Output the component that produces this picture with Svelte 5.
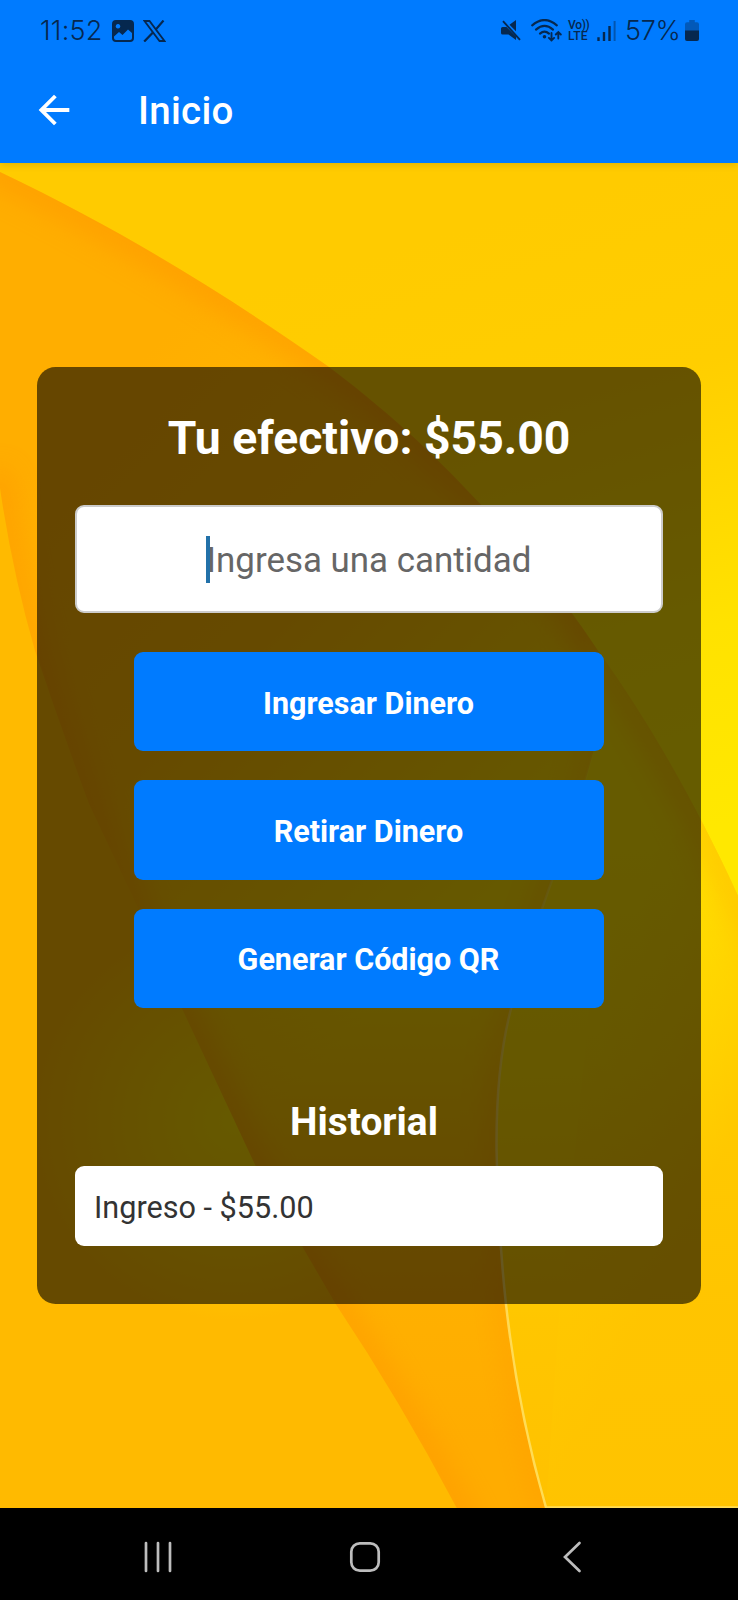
<script>
  let amount = $state('');
  const balance = 55;
  const actions = ['Ingresar Dinero', 'Retirar Dinero', 'Generar Código QR'];
  const history = [{ kind: 'Ingreso', value: 55 }];
</script>

<div class="phone">
  <header>
    <div class="status">
      <span class="clock">11:52</span>
      <svg class="photo" width="22" height="22" viewBox="0 0 22 22">
        <path fill-rule="evenodd" d="M4 0h14a4 4 0 0 1 4 4v14a4 4 0 0 1-4 4H4a4 4 0 0 1-4-4V4a4 4 0 0 1 4-4ZM6 4a2.3 2.3 0 1 0 .01 0ZM2 16.5V18a2 2 0 0 0 2 2h14a2 2 0 0 0 2-2v-5l-4-3.5-5.5 5.5-3.5-3Z" fill="currentColor" />
      </svg>
      <svg class="x" width="23" height="22" viewBox="0 0 23 22">
        <path d="M1.5 1h5l15 20h-5Z" fill="none" stroke="currentColor" stroke-width="1.8" />
        <path d="M20.5.5 12.7 9.6M9.7 12.8 1.2 21.6" stroke="currentColor" stroke-width="2.2" />
      </svg>
      <span class="spacer"></span>
      <svg class="mute" width="20" height="21" viewBox="0 0 20 21">
        <path d="M0 8.6Q0 7 1.6 7H5.5L15 16.5V20L7.5 14.5H1.6Q0 14.5 0 13ZM8.5 4.800 15 0v11.3Z" fill="currentColor" />
        <path d="m2 1.2 17 18.6" stroke="currentColor" stroke-width="1.9" />
      </svg>
      <svg class="wifi" width="31" height="23" viewBox="0 0 31 23">
        <g fill="none" stroke="currentColor" stroke-width="2.2" stroke-linecap="round">
          <path d="M1.2 6.3Q13.5-4.2 25.8 6.3M5 10.6q8.5-7.4 17 0M9 14.6q4.5-3.8 9 0" />
          <path d="M20.5 14v7.5m-2.6-2.600 2.600 2.600 2.600-2.600M27.300 19.500v-6.500m-2.500 2.500 2.500-2.500 2.500 2.500" stroke-width="1.9" />
        </g>
        <circle cx="13.5" cy="17.8" r="1.8" fill="currentColor" />
      </svg>
      <span class="volte"><span>Vo))</span><span class="lte">LTE</span></span>
      <svg class="signal" width="19" height="20" viewBox="0 0 19 20">
        <path d="M1.5 16.2V20M7 11v9M12.5 5v15" stroke="currentColor" stroke-width="2.4" />
        <path d="M17.6 0v20" stroke="currentColor" stroke-width="2" opacity=".45" />
      </svg>
      <span class="percent">57%</span>
      <svg class="battery" width="14" height="21" viewBox="0 0 14 21">
        <path d="M4.2 0h5.6v2.2H12q2 0 2 2V11H0V4.2q0-2 2-2h2.2Z" fill="currentColor" opacity=".4" />
        <path d="M0 10.5h14V19q0 2-2 2H2q-2 0-2-2Z" fill="currentColor" />
      </svg>
    </div>
    <div class="appbar">
      <svg width="46" height="46" viewBox="0 0 24 24" fill="#fff">
        <path d="M20 11H7.83l5.59-5.59L12 4l-8 8 8 8 1.41-1.41L7.83 13H20v-2z" />
      </svg>
      <h1>Inicio</h1>
    </div>
  </header>

  <main>
    <svg class="wallpaper" viewBox="0 162 738 1346" preserveAspectRatio="none" aria-hidden="true">
      <defs>
        <linearGradient id="sky" gradientUnits="userSpaceOnUse" x1="420" y1="240" x2="600" y2="860">
          <stop offset="0" stop-color="#ffcb00" /><stop offset=".3" stop-color="#ffce00" /><stop offset=".7" stop-color="#ffe200" /><stop offset="1" stop-color="#ffe800" />
        </linearGradient>
        <linearGradient id="band" gradientUnits="userSpaceOnUse" x1="120" y1="380" x2="560" y2="820">
          <stop offset="0" stop-color="#ffae00" /><stop offset=".45" stop-color="#ffb900" /><stop offset="1" stop-color="#ffde00" />
        </linearGradient>
        <linearGradient id="bandFade" gradientUnits="userSpaceOnUse" x1="0" y1="950" x2="0" y2="1440">
          <stop offset="0" stop-color="#ffad00" stop-opacity="0" /><stop offset=".7" stop-color="#ffb000" /><stop offset="1" stop-color="#ffac00" />
        </linearGradient>
        <radialGradient id="leaf" gradientUnits="userSpaceOnUse" cx="235" cy="1120" r="200">
          <stop offset="0" stop-color="#ffe000" /><stop offset=".45" stop-color="#ffd000" /><stop offset="1" stop-color="#ffba00" />
        </radialGradient>
        <linearGradient id="petal" gradientUnits="userSpaceOnUse" x1="610" y1="820" x2="640" y2="1508">
          <stop offset="0" stop-color="#ffe400" /><stop offset=".35" stop-color="#ffdc00" /><stop offset=".72" stop-color="#ffc600" /><stop offset="1" stop-color="#ffc100" />
        </linearGradient>
        <linearGradient id="rim" gradientUnits="userSpaceOnUse" x1="0" y1="740" x2="0" y2="1400">
          <stop offset="0" stop-color="#fff0a0" stop-opacity="0" /><stop offset=".5" stop-color="#ffe27a" stop-opacity=".55" /><stop offset="1" stop-color="#ffdc55" />
        </linearGradient>
        <linearGradient id="edge" gradientUnits="userSpaceOnUse" x1="600" y1="950" x2="780" y2="1040">
          <stop offset="0" stop-color="#ffd000" stop-opacity="0" /><stop offset="1" stop-color="#ffc400" />
        </linearGradient>
        <filter id="soft" filterUnits="userSpaceOnUse" x="-80" y="80" width="900" height="1520"><feGaussianBlur stdDeviation="14" /></filter>
        <clipPath id="bandClip"><path d="M0 171C130 233 235 300 329 366C400 420 440 460 482 505C530 560 560 592 598 650C640 708 690 790 738 895V1508H0Z" /></clipPath>
      </defs>
      <rect y="162" width="738" height="1346" fill="url(#sky)" />
      <g clip-path="url(#bandClip)">
        <rect y="162" width="738" height="1346" fill="url(#band)" />
        <rect y="900" width="738" height="608" fill="url(#bandFade)" />
        <path d="M-20 162C130 233 235 300 329 366C400 420 440 460 482 505C530 560 560 592 598 650" fill="none" stroke="#ff8f00" stroke-width="24" opacity=".5" filter="url(#soft)" />
        <path d="M-4 470L0 487Q12 570 35 650Q62 730 89 803L136 903L183 1010L256 1166L336 1304Q405 1410 470 1530" fill="none" stroke="#ff8c00" stroke-width="24" opacity=".42" filter="url(#soft)" />
        <path d="M600 690L593 752C570 840 530 930 511 1008Q496 1065 496.5 1148Q498 1230 506 1304Q518 1410 550 1520" fill="none" stroke="#ff8b00" stroke-width="15" opacity=".38" filter="url(#soft)" />
        <path d="M604 620Q603 700 593 752C570 840 530 930 511 1008Q496 1065 496.5 1148Q498 1230 506 1304Q518 1410 546 1508H738V620Z" fill="url(#petal)" />
        <path d="M578 624L598 650C640 708 690 790 738 895L770 960" fill="none" stroke="#ffb400" stroke-width="36" opacity=".5" filter="url(#soft)" />
        <path d="M738 780V1508H546L560 1300L600 900Z" fill="url(#edge)" opacity=".75" />
        <path d="M593 752C570 840 530 930 511 1008Q496 1065 496.5 1148Q498 1230 506 1304Q518 1410 546 1507H738" fill="none" stroke="url(#rim)" stroke-width="2.5" />
      </g>
      <path d="M0 487Q12 570 35 650Q62 730 89 803L136 903L183 1010L256 1166L336 1304Q400 1400 457 1508H0Z" fill="url(#leaf)" />
    </svg>

    <section class="card">
      <h2>Tu efectivo: ${balance.toFixed(2)}</h2>
      <label class="field">
        <input aria-label="Ingresa una cantidad" placeholder="Ingresa una cantidad" bind:value={amount} />
        <i class="caret"></i>
      </label>
      <div class="actions">
        {#each actions as action}
          <button>{action}</button>
        {/each}
      </div>
      <h3>Historial</h3>
      {#each history as item}
        <div class="entry">{item.kind} - ${item.value.toFixed(2)}</div>
      {/each}
    </section>
  </main>

  <nav>
    <svg width="34" height="34" viewBox="0 0 34 34"><path d="M5 3v28M17 3v28M29 3v28" /></svg>
    <svg width="34" height="34" viewBox="0 0 34 34"><rect x="3.3" y="3.3" width="27.4" height="27.4" rx="8.5" /></svg>
    <svg width="34" height="34" viewBox="0 0 34 34"><path d="M24.5 3 10 17l14.5 14" /></svg>
  </nav>
</div>

<style>
  :global(body) { margin: 0; }
  .phone {
    width: 738px;
    height: 1600px;
    display: flex;
    flex-direction: column;
    overflow: hidden;
    font-family: Roboto, sans-serif;
    background: #000;
  }
  h1, h2, h3 { margin: 0; white-space: nowrap; }
  header {
    height: 162.5px;
    flex: none;
    background: #007bff;
    z-index: 1;
    box-shadow: 0 1px 8px rgba(80, 70, 0, .2);
  }
  .status {
    height: 61px;
    display: flex;
    align-items: center;
    padding: 0 39px 0 40px;
    color: #06284f;
    font-family: Inter, sans-serif;
    font-size: 27px;
    font-weight: 300;
    line-height: 61px;
  }
  .status svg { flex: none; }
  .spacer { flex: 1; }
  .clock { width: 72px; letter-spacing: .2px; white-space: nowrap; }
  .photo { margin-right: 9px; }
  .mute { margin-right: 10px; }
  .wifi { margin-right: 6px; }
  .volte {
    width: 23px;
    display: flex;
    flex-direction: column;
    margin-right: 6px;
    font: 500 12px/11px Roboto, sans-serif;
    letter-spacing: -.3px;
    white-space: nowrap;
  }
  .lte { letter-spacing: .2px; }
  .signal { margin-right: 9px; }
  .percent { width: 55px; letter-spacing: -.3px; white-space: nowrap; }
  .battery { margin-left: 5px; }
  .appbar {
    height: 98px;
    display: flex;
    align-items: center;
    padding-left: 31px;
  }
  .appbar svg { margin-top: -1px; }
  h1 {
    margin: 2px 0 0 61px;
    color: #fff;
    font-size: 38.5px;
    font-weight: 500;
    letter-spacing: .3px;
    line-height: 44px;
  }
  main {
    flex: 1;
    display: grid;
    justify-items: center;
    align-items: start;
    min-height: 0;
  }
  .wallpaper {
    grid-area: 1 / 1;
    width: 738px;
    height: 1345.5px;
    display: block;
  }
  .card {
    grid-area: 1 / 1;
    z-index: 1;
    box-sizing: border-box;
    width: 664px;
    height: 937.5px;
    margin-top: 204px;
    padding: 37.5px 38px;
    border-radius: 18.5px;
    background: rgba(0, 0, 0, .6);
    display: flex;
    flex-direction: column;
    color: #fff;
  }
  h2 {
    height: 64px;
    text-align: center;
    font-size: 46.3px;
    font-weight: 700;
    line-height: 68px;
  }
  .field {
    display: grid;
    margin-top: 37px;
    height: 108px;
    flex: none;
  }
  input {
    grid-area: 1 / 1;
    box-sizing: border-box;
    width: 100%;
    height: 108px;
    padding: 3px 0 0;
    border: 2px solid #ccc;
    border-radius: 9px;
    background: #fff;
    font: 400 34.9px Roboto, sans-serif;
    text-align: center;
    outline: none;
  }
  input::placeholder { color: #666; opacity: 1; }
  .caret {
    grid-area: 1 / 1;
    width: 4.5px;
    height: 47px;
    margin: 31px 0 0 130.5px;
    background: #2271a9;
    z-index: 1;
  }
  .actions {
    display: flex;
    flex-direction: column;
    align-items: center;
    gap: 29px;
    margin-top: 39px;
  }
  button {
    width: 470px;
    height: 99.300px;
    padding: 3px 1px 0 0;
    border: 0;
    border-radius: 9px;
    background: #007bff;
    color: #fff;
    font: 700 30.5px Roboto, sans-serif;
  }
  h3 {
    margin-top: 88px;
    padding-right: 10px;
    height: 70px;
    text-align: center;
    font-size: 38.9px;
    font-weight: 700;
    line-height: 52px;
  }
  .entry {
    height: 80px;
    box-sizing: border-box;
    padding-left: 19px;
    border-radius: 9px;
    background: #fff;
    color: #333;
    font-size: 30.6px;
    line-height: 83px;
  }
  nav {
    height: 92px;
    flex: none;
    box-sizing: border-box;
    padding: 6px 63px 0 55px;
    background: #000;
    z-index: 1;
    display: grid;
    grid-template-columns: repeat(3, 1fr);
    place-items: center;
  }
  nav svg { fill: none; stroke: #bdbdbd; stroke-width: 2.7; stroke-linecap: round; }
</style>
